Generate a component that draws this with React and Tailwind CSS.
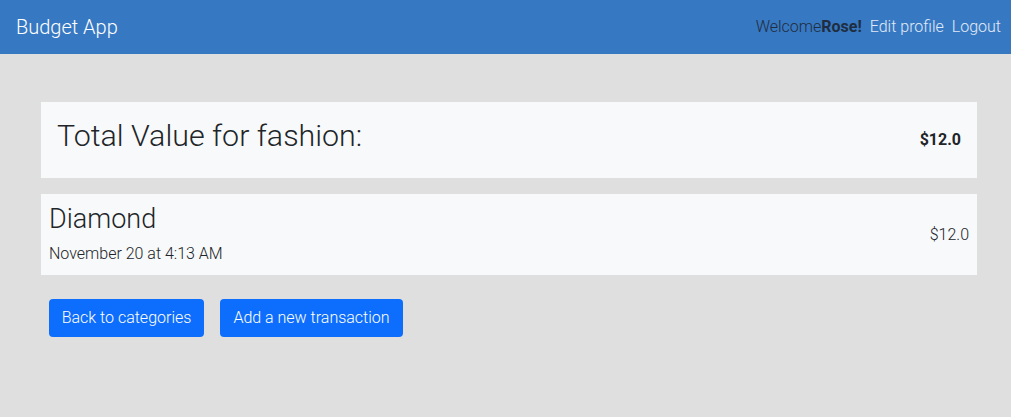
export default function App() {
  return (
    <div className="min-h-[417px] bg-[#dfdfdf] text-[#212529]" style={{ fontFamily: "Roboto, 'Liberation Sans', sans-serif" }}>
      <nav className="h-[54px] bg-[#3778c2] flex items-center justify-between pl-4 pr-[10px] font-light">
        <span className="text-[20px] text-white">Budget App</span>
        <div className="flex items-center gap-2 text-[16px]">
          <span className="text-[#1f2d40]">Welcome<b className="font-bold">Rose!</b></span>
          <span className="text-white/85">Edit profile</span>
          <span className="text-white/85">Logout</span>
        </div>
      </nav>
      <main className="pl-[41px] pr-[34px] pt-[48px]">
        <div className="bg-[#f8f9fa] h-[76px] flex items-center justify-between px-4">
          <h2 className="text-[30.4px] font-light leading-none pb-2">Total Value for fashion:</h2>
          <span className="text-[16px] font-bold">$12.0</span>
        </div>
        <div className="bg-[#f8f9fa] h-[81px] mt-4 flex items-center justify-between px-2">
          <div className="flex flex-col">
            <span className="text-[27px] font-light leading-tight">Diamond</span>
            <span className="text-[16px] font-light mt-[5px]">November 20 at 4:13 AM</span>
          </div>
          <span className="text-[16px] font-light">$12.0</span>
        </div>
        <div className="flex gap-4 mt-6 pl-2">
          <button className="bg-[#0d6efd] text-white font-light text-[16px] h-[38px] w-[155px] rounded">Back to categories</button>
          <button className="bg-[#0d6efd] text-white font-light text-[16px] h-[38px] w-[183px] rounded">Add a new transaction</button>
        </div>
      </main>
    </div>
  );
}
